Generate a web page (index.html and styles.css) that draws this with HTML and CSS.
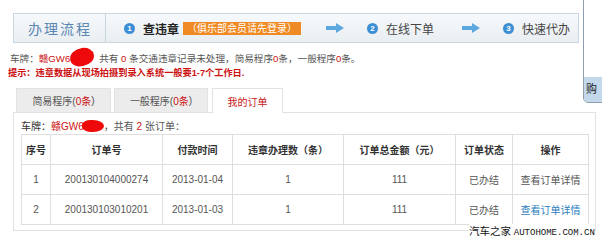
FILE: index.html
```html
<!DOCTYPE html>
<html lang="zh-CN">
<head>
<meta charset="utf-8">
<title>办理流程</title>
<link rel="stylesheet" href="styles.css">
</head>
<body>
<div class="page">
  <div class="steps">
    <div class="steps-title">办理流程</div>
    <div class="step step-current">
      <span class="num">1</span><span class="step-name">查违章</span><span class="login-tip">（俱乐部会员请先登录）</span>
    </div>
    <svg class="arrow" width="18" height="10" viewBox="0 0 18 10"><polygon points="0,3 10,3 10,0 18,5 10,10 10,7 0,7" fill="#5aa8df"/></svg>
    <div class="step">
      <span class="num">2</span><span class="step-name">在线下单</span>
    </div>
    <svg class="arrow arrow-2" width="18" height="10" viewBox="0 0 18 10"><polygon points="0,3 10,3 10,0 18,5 10,10 10,7 0,7" fill="#5aa8df"/></svg>
    <div class="step">
      <span class="num">3</span><span class="step-name">快速代办</span>
    </div>
  </div>

  <p class="summary">车牌：<span class="red">赣GW6</span><span class="blot"></span>共有 <span class="red">0</span> 条交通违章记录未处理，简易程序<span class="red">0</span>条，一般程序<span class="red">0</span>条。</p>
  <p class="hint">提示：违章数据从现场拍摄到录入系统一般要1-7个工作日.</p>

  <div class="tabs">
    <div class="tab tab-1">简易程序(<span class="red">0条</span>)</div>
    <div class="tab tab-2">一般程序(<span class="red">0条</span>)</div>
    <div class="tab tab-active">我的订单</div>
  </div>

  <div class="panel">
    <p class="panel-info"><span class="dark">车牌：</span><span class="red">赣GW6</span><span class="blot blot-2"></span>，共有 <span class="red">2</span> 张订单：</p>
    <table class="orders">
      <colgroup>
        <col class="c1"><col class="c2"><col class="c3"><col class="c4"><col class="c5"><col class="c6"><col class="c7">
      </colgroup>
      <thead>
        <tr><th>序号</th><th>订单号</th><th>付款时间</th><th>违章办理数（条）</th><th>订单总金额（元）</th><th>订单状态</th><th>操作</th></tr>
      </thead>
      <tbody>
        <tr><td>1</td><td>200130104000274</td><td>2013-01-04</td><td>1</td><td>111</td><td>已办结</td><td><a class="detail">查看订单详情</a></td></tr>
        <tr><td>2</td><td>200130103010201</td><td>2013-01-03</td><td>1</td><td>111</td><td>已办结</td><td><a class="detail detail-hover">查看订单详情</a></td></tr>
      </tbody>
    </table>
  </div>
</div>

<div class="side-widget"><div class="side-strip">购</div></div>
<div class="watermark"><span class="wm-cn">汽车之家</span> <span class="wm-en">AUTOHOME.COM.CN</span></div>
</body>
</html>
```

FILE: styles.css
```css
* { box-sizing: border-box; }
html, body { margin: 0; padding: 0; background: #fff; }
body {
  font-family: "Liberation Sans", "Noto Sans CJK SC", sans-serif;
  font-size: 10px;
  color: #555;
  position: relative;
  width: 602px;
  height: 240px;
  overflow: hidden;
}
p { margin: 0; }
.page { padding-top: 13px; }
.red { color: #cc1111; }
.dark { color: #333; }

/* steps bar */
.steps {
  margin-left: 13px;
  width: 566px;
  height: 30px;
  display: flex;
  align-items: center;
  border: 1px solid #c9d5df;
  background: linear-gradient(#f7f9fb, #e9eef2);
}
.steps-title {
  width: 92px;
  height: 100%;
  display: flex;
  align-items: center;
  justify-content: center;
  border-right: 1px solid #c9d5df;
  font-size: 14px;
  letter-spacing: 2px;
  color: #5a86b2;
  padding-left: 1px;
}
.step {
  display: flex;
  align-items: center;
  font-size: 12px;
  color: #444;
}
.step-current { margin-left: 18px; }
.step-current .step-name { font-weight: bold; color: #222; }
.num {
  width: 11px;
  height: 11px;
  border-radius: 50%;
  background: #3c8fd4;
  color: #fff;
  font-size: 8px;
  font-weight: bold;
  line-height: 11px;
  text-align: center;
  margin-right: 8px;
}
.login-tip {
  margin-left: 4px;
  background: #f08a24;
  color: #fff;
  font-size: 10px;
  line-height: 13px;
  padding: 0 4px;
}
.arrow { margin: 0 23px 0 25px; flex: none; }
.arrow-2 { margin-left: 28px; }

/* info lines */
.summary, .hint {
  font-size: 9.6px;
  line-height: 14px;
  padding-left: 10px;
}
.summary { margin-top: 9px; }
.hint { color: #cc1111; font-weight: bold; font-size: 9.2px; padding-left: 8px; }
.blot {
  display: inline-block;
  width: 24px;
  height: 18px;
  background: #ee0a0a;
  border-radius: 55% 45% 50% 40%;
  vertical-align: -4px;
  margin: -6px 5px 0 0;
  transform: rotate(-8deg);
}
.blot-2 {
  width: 22px;
  height: 12px;
  vertical-align: -2px;
  margin: 0 0 0 -2px;
  border-radius: 40% 50% 50% 45%;
  transform: none;
}

/* tabs */
.tabs {
  display: flex;
  margin: 8px 0 0 16px;
  height: 24px;
  position: relative;
  z-index: 1;
}
.tab {
  height: 24px;
  display: flex;
  align-items: center;
  justify-content: center;
  background: #ececec;
  border: 1px solid #e2e2e2;
  border-bottom: none;
  color: #555;
  font-size: 10px;
}
.tab-1 { width: 95px; }
.tab-2 { width: 94px; margin-left: 3px; }
.tab-active {
  width: 71px;
  margin-left: 4px;
  height: 25px;
  background: #fff;
  color: #c81818;
}

/* panel */
.panel {
  margin-left: 13px;
  width: 583px;
  border: 1px solid #e2e2e2;
  padding: 7px 7px 5px 7px;
}
.panel-info {
  line-height: 14px;
  font-size: 10px;
  color: #555;
}
.orders {
  width: 567px;
  table-layout: fixed;
  border-collapse: collapse;
  font-size: 10px;
}
.c1 { width: 29px; }
.c2 { width: 112px; }
.c3 { width: 70px; }
.c4 { width: 111px; }
.c5 { width: 112px; }
.c6 { width: 57px; }
.c7 { width: 76px; }
.orders th, .orders td {
  border: 1px solid #dedede;
  height: 30px;
  padding: 0;
  text-align: center;
  white-space: nowrap;
}
.orders th { color: #333; font-weight: bold; }
.orders td { color: #555; }
.detail { color: #555; }
.detail-hover { color: #2a7cbc; }

/* overlays */
.side-widget {
  position: absolute;
  left: 583px;
  top: -10px;
  width: 40px;
  height: 113px;
  border: 1px solid #8e9dab;
  border-radius: 0 0 0 5px;
  background: #fff;
  display: flex;
  flex-direction: column;
  justify-content: flex-end;
}
.side-strip {
  height: 25px;
  background: #c3d9eb;
  border-radius: 0 0 0 4px;
  font-size: 11px;
  color: #222;
  line-height: 25px;
  padding-left: 2px;
}
.watermark {
  position: absolute;
  left: 469px;
  top: 224px;
  background: #fff;
  color: #111;
  line-height: 13px;
  white-space: nowrap;
}
.wm-cn { font-family: "Noto Sans CJK SC", sans-serif; font-size: 10.5px; }
.wm-en { font-family: "Liberation Mono", monospace; font-size: 9px; }
```
